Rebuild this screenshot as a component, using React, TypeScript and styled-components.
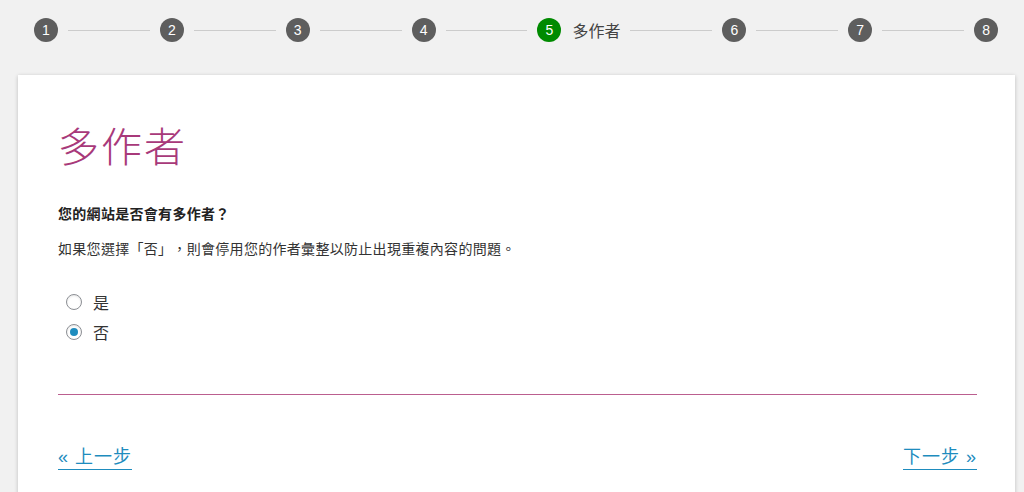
import React, { useState } from 'react'
import styled, { createGlobalStyle } from 'styled-components'

const purple = '#a4286a'
const blue = '#1e8cbe'
const font = `"Liberation Sans", "Noto Sans CJK TC", sans-serif`

const GlobalStyle = createGlobalStyle`
  body {
    margin: 0;
    background: #f1f1f1;
    font-family: ${font};
    color: #333;
    overflow: hidden;
    text-spacing-trim: space-all;
  }
`

const Steps = styled.div`
  display: flex;
  align-items: center;
  padding: 18px 26px 0 34px;
`

const Circle = styled.div<{ active?: boolean }>`
  flex: none;
  width: 24px;
  height: 24px;
  border-radius: 50%;
  background: ${props => props.active ? '#008a00' : '#5e5e5e'};
  color: #fff;
  font-size: 14px;
  line-height: 24px;
  text-align: center;
`

const StepLabel = styled.span`
  margin-left: 11px;
  font-size: 16px;
  color: #444;
  white-space: nowrap;
`

const Line = styled.div`
  flex: 1;
  height: 1px;
  margin: 0 10px;
  background: #ccc;
`

const Card = styled.div`
  margin: 33px 9px 0 18px;
  min-height: 460px;
  padding: 49px 38px 40px 40px;
  background: #fff;
  box-shadow: 0 1px 4px rgba(0, 0, 0, 0.22);
`

const Title = styled.h1`
  margin: 0;
  font-size: 41px;
  font-weight: 300;
  line-height: 48px;
  letter-spacing: 2px;
  color: #a8397a;
`

const Question = styled.p`
  margin: 32px 0 0;
  font-size: 14px;
  font-weight: bold;
  line-height: 20px;
  letter-spacing: 0.3px;
  color: #222;
`

const Desc = styled.p`
  margin: 15px 0 0;
  font-size: 14px;
  line-height: 20px;
  letter-spacing: 0.3px;
  color: #333;
`

const Options = styled.div`
  display: flex;
  flex-direction: column;
  margin-top: 28px;
  padding-left: 8px;
`

const Option = styled.label`
  display: flex;
  align-items: center;
  gap: 11px;
  height: 30px;
  font-size: 16px;
  color: #333;
  cursor: pointer;
`

const Radio = styled.input.attrs({ type: 'radio' })`
  appearance: none;
  margin: 0;
  width: 16px;
  height: 16px;
  border-radius: 50%;
  border: 1px solid #8c8f94;
  background: #fff;
  display: grid;
  place-items: center;
  box-shadow: inset 0 1px 2px rgba(0, 0, 0, 0.1);
  &:checked::before {
    content: '';
    width: 8px;
    height: 8px;
    border-radius: 50%;
    background: ${blue};
  }
`

const Divider = styled.hr`
  margin: 47px 0 0;
  border: 0;
  height: 1px;
  background: ${purple};
  opacity: 0.75;
`

const Nav = styled.div`
  display: flex;
  justify-content: space-between;
  margin-top: 51px;
`

const NavLink = styled.a`
  display: inline-block;
  font-size: 18px;
  line-height: 23px;
  letter-spacing: 1px;
  color: ${blue};
  text-decoration: none;
  border-bottom: 1px solid ${blue};
  cursor: pointer;
`

const steps = [1, 2, 3, 4, 5, 6, 7, 8]

export default function App() {
  const [answer, setAnswer] = useState('no')
  return (
    <>
      <GlobalStyle />
      <Steps>
        {steps.map((n, i) => (
          <React.Fragment key={n}>
            {i > 0 && <Line />}
            <Circle active={n === 5}>{n}</Circle>
            {n === 5 && <StepLabel>多作者</StepLabel>}
          </React.Fragment>
        ))}
      </Steps>
      <Card>
        <Title>多作者</Title>
        <Question>您的網站是否會有多作者？</Question>
        <Desc>如果您選擇「否」，則會停用您的作者彙整以防止出現重複內容的問題。</Desc>
        <Options>
          <Option>
            <Radio name="multi" checked={answer === 'yes'} onChange={() => setAnswer('yes')} />
            是
          </Option>
          <Option>
            <Radio name="multi" checked={answer === 'no'} onChange={() => setAnswer('no')} />
            否
          </Option>
        </Options>
        <Divider />
        <Nav>
          <NavLink>« 上一步</NavLink>
          <NavLink>下一步 »</NavLink>
        </Nav>
      </Card>
    </>
  )
}
